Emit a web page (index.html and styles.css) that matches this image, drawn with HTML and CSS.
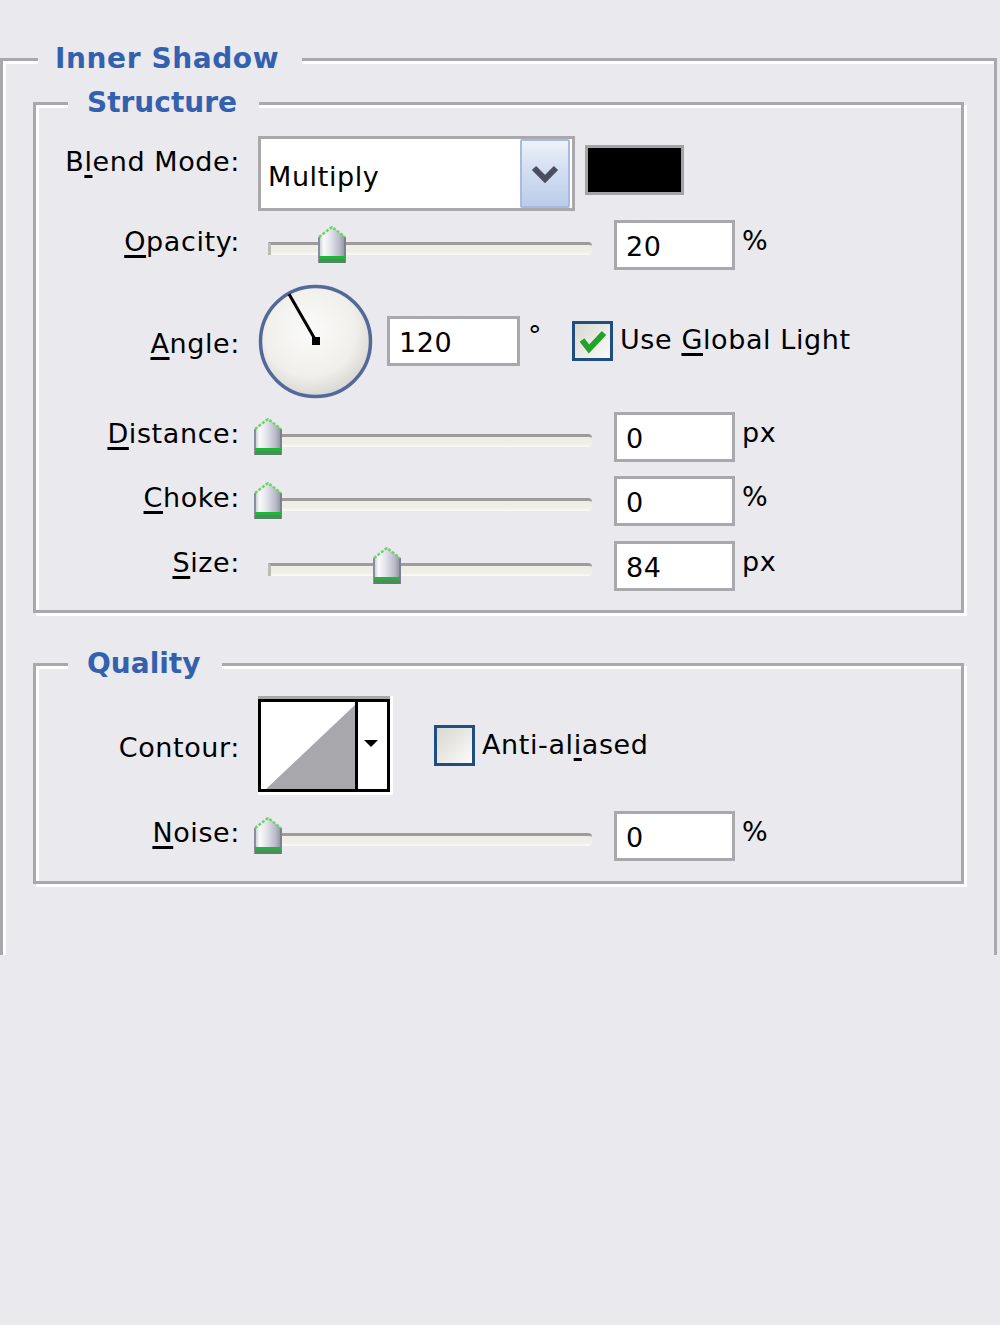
FILE: index.html
```html
<!DOCTYPE html>
<html>
<head>
<meta charset="utf-8">
<title>Inner Shadow</title>
<link rel="stylesheet" href="styles.css">
</head>
<body>
<svg class="defs" width="0" height="0" aria-hidden="true">
  <defs>
    <linearGradient id="thumbFill" x1="0" y1="0" x2="1" y2="0">
      <stop offset="0" stop-color="#c4c4d0"/>
      <stop offset="0.18" stop-color="#fbfbfd"/>
      <stop offset="0.45" stop-color="#e2e2ea"/>
      <stop offset="0.8" stop-color="#b9b9c8"/>
      <stop offset="1" stop-color="#8d8fa0"/>
    </linearGradient>
    <radialGradient id="dialFill" cx="0.45" cy="0.4" r="0.6">
      <stop offset="0" stop-color="#fbfbf9"/>
      <stop offset="0.7" stop-color="#f0efeb"/>
      <stop offset="1" stop-color="#d8d7d2"/>
    </radialGradient>
    <symbol id="thumb" viewBox="0 0 28 38">
      <polygon points="1,11 14,1 27,11 27,37 1,37" fill="url(#thumbFill)"/>
      <polyline points="1,37 1,11" fill="none" stroke="#8a8e9c" stroke-width="2"/>
      <polyline points="27,11 27,37" fill="none" stroke="#7c8090" stroke-width="2"/>
      <polyline points="1,11 14,1 27,11" fill="none" stroke="#6fd46f" stroke-width="2.5" stroke-dasharray="3 1.5"/>
      <rect x="1" y="30" width="26" height="3" fill="#1fb53a"/>
      <rect x="1" y="33" width="26" height="4" fill="#4d8a5e"/>
    </symbol>
  </defs>
</svg>

<div class="outer">
  <div class="title title-outer">Inner Shadow</div>

  <div class="group group-structure">
    <div class="title">Structure</div>

    <div class="row row-blend">
      <div class="label">B<u>l</u>end Mode:</div>
      <div class="select">
        <span class="select-text">Multiply</span>
        <span class="select-btn">
          <svg width="50" height="69" viewBox="0 0 50 69"><polyline points="14,29 25,40 36,29" fill="none" stroke="#4a4e5e" stroke-width="6"/></svg>
        </span>
      </div>
      <div class="swatch"></div>
    </div>

    <div class="row row-opacity">
      <div class="label"><u>O</u>pacity:</div>
      <div class="slider"><div class="track"></div><svg class="thumb" style="left:64px"><use href="#thumb"/></svg></div>
      <div class="field">20</div>
      <div class="unit">%</div>
    </div>

    <div class="row row-angle">
      <div class="label label-angle"><u>A</u>ngle:</div>
      <svg class="dial" width="115" height="115" viewBox="0 0 115 115">
        <circle cx="57.5" cy="57.5" r="55" fill="url(#dialFill)" stroke="#52699a" stroke-width="3.5"/>
        <line x1="58" y1="57" x2="31" y2="10" stroke="#000" stroke-width="3"/>
        <rect x="54" y="53" width="8" height="8" fill="#000"/>
      </svg>
      <div class="field field-angle">120</div>
      <div class="deg">°</div>
      <div class="checkbox">
        <svg width="35" height="34" viewBox="0 0 35 34"><polyline points="7,16 14,25 29,9" fill="none" stroke="#21a32a" stroke-width="6"/></svg>
      </div>
      <div class="check-label">Use <u>G</u>lobal Light</div>
    </div>

    <div class="row row-distance">
      <div class="label"><u>D</u>istance:</div>
      <div class="slider"><div class="track"></div><svg class="thumb" style="left:0px"><use href="#thumb"/></svg></div>
      <div class="field">0</div>
      <div class="unit">px</div>
    </div>

    <div class="row row-choke">
      <div class="label"><u>C</u>hoke:</div>
      <div class="slider"><div class="track"></div><svg class="thumb" style="left:0px"><use href="#thumb"/></svg></div>
      <div class="field">0</div>
      <div class="unit">%</div>
    </div>

    <div class="row row-size">
      <div class="label"><u>S</u>ize:</div>
      <div class="slider"><div class="track"></div><svg class="thumb" style="left:119px"><use href="#thumb"/></svg></div>
      <div class="field">84</div>
      <div class="unit">px</div>
    </div>
  </div>

  <div class="group group-quality">
    <div class="title">Quality</div>

    <div class="row row-contour">
      <div class="label label-contour">Contour:</div>
      <svg class="contour" width="135" height="99" viewBox="0 0 135 99">
        <rect x="0" y="0" width="135" height="99" fill="#fff"/>
        <rect x="0" y="0" width="132" height="3" fill="#a8a8ac"/>
        <rect x="1.5" y="4.5" width="129" height="90" fill="#fff" stroke="#000" stroke-width="3"/>
        <polygon points="8,93 98,8 98,93" fill="#a8a7ac"/>
        <rect x="97" y="4" width="3" height="90" fill="#000"/>
        <polygon points="106,44 120,44 113,51" fill="#000"/>
      </svg>
      <div class="checkbox checkbox-aa"></div>
      <div class="check-label">Anti-al<u>i</u>ased</div>
    </div>

    <div class="row row-noise">
      <div class="label"><u>N</u>oise:</div>
      <div class="slider"><div class="track"></div><svg class="thumb" style="left:0px"><use href="#thumb"/></svg></div>
      <div class="field">0</div>
      <div class="unit">%</div>
    </div>
  </div>
</div>
</body>
</html>
```

FILE: styles.css
```css
* { box-sizing: border-box; }

html, body {
  margin: 0;
  padding: 0;
}

body {
  width: 1000px;
  height: 1325px;
  overflow: hidden;
  background: #eae9ee;
  font-family: "DejaVu Sans", Verdana, sans-serif;
  font-size: 27px;
  letter-spacing: 0.6px;
  color: #000;
}

u {
  text-decoration-thickness: 3px;
  text-underline-offset: 4px;
}

.defs {
  display: block;
  width: 0;
  height: 0;
}

.outer {
  margin: 58px 3px 0 0;
  border: 3px solid #a9a9ad;
  border-bottom: none;
  box-shadow: inset 3px 3px 0 #fff;
  padding: 0 30px 71px 30px;
}

.title {
  display: block;
  width: fit-content;
  margin: -18px 0 0 32px;
  padding: 0 22px 0 19px;
  background: #eae9ee;
  color: #3461ad;
  font-weight: bold;
  font-size: 28px;
  line-height: 32px;
  letter-spacing: 0;
  white-space: nowrap;
}

.title-outer {
  margin-left: 5px;
  padding: 0 23px 0 17px;
  letter-spacing: 0.6px;
}

.group {
  border: 3px solid #a9a9ad;
  box-shadow: inset 3px 3px 0 #fff, 3px 3px 0 #fff;
}

.group-structure {
  margin-top: 27px;
  padding-bottom: 19px;
}

.group-quality {
  margin-top: 50px;
  padding-bottom: 21px;
}

.row {
  display: flex;
  align-items: center;
}

.label {
  flex: none;
  width: 204px;
  margin-right: 18px;
  text-align: right;
  line-height: 32px;
  padding-bottom: 6px;
  white-space: nowrap;
}

/* Blend mode row */
.row-blend {
  margin-top: 17px;
  height: 75px;
  align-items: flex-start;
}

.row-blend .label {
  margin-top: 10px;
  padding-bottom: 0;
}

.select {
  flex: none;
  width: 317px;
  height: 75px;
  border: 3px solid #a9a9ad;
  background: #fff;
  display: flex;
  align-items: center;
}

.select-text {
  flex: 1;
  padding: 5px 0 0 7px;
}

.select-btn {
  flex: none;
  width: 50px;
  height: 69px;
  margin-right: 2px;
  border: 2px solid #a6bbdf;
  border-radius: 2px;
  background: linear-gradient(#eef2fa, #d3def1 45%, #bccde9);
  display: flex;
}

.select-btn svg {
  display: block;
  margin: -2px;
}

.swatch {
  flex: none;
  width: 99px;
  height: 50px;
  margin: 9px 0 0 10px;
  border: 3px solid #a3a3a7;
  background: #000;
}

/* sliders */
.slider {
  position: relative;
  flex: none;
  width: 340px;
  height: 38px;
  margin-left: -4px;
}

.track {
  width: 324px;
  height: 13px;
  margin: 16px 0 0 14px;
  border-top: 3px solid #9c9c9c;
  border-left: 3px solid #bdbdb5;
  border-radius: 0 4px 4px 0;
  background: linear-gradient(#efeee6, #f0efe7 70%, #fbfbf8);
}

.thumb {
  position: absolute;
  top: 0;
  width: 28px;
  height: 38px;
}

.field {
  flex: none;
  width: 121px;
  height: 50px;
  margin-left: 20px;
  padding: 3px 0 0 9px;
  border: 3px solid #a9a9ad;
  background: #fff;
  display: flex;
  align-items: center;
}

.unit {
  align-self: flex-start;
  margin: 5px 0 0 7px;
  line-height: 32px;
}

.row-opacity {
  margin-top: 9px;
  height: 49px;
}

/* angle row */
.row-angle {
  margin-top: 15px;
  height: 114px;
}

.label-angle {
  padding-bottom: 0;
  padding-top: 6px;
}

.dial {
  flex: none;
  display: block;
}

.field-angle {
  width: 133px;
  margin-left: 14px;
}

.deg {
  flex: none;
  width: 52px;
  padding: 0 0 10px 8px;
  line-height: 32px;
}

.checkbox {
  flex: none;
  width: 41px;
  height: 40px;
  border: 3px solid #1f4f80;
  background: linear-gradient(135deg, #d8d7d1, #fbfbfa);
}

.checkbox svg {
  display: block;
}

.check-label {
  margin-left: 7px;
  line-height: 32px;
  padding-bottom: 2px;
  white-space: nowrap;
}

.row-distance,
.row-choke {
  margin-top: 14px;
  height: 50px;
}

.row-size {
  margin-top: 15px;
  height: 50px;
}

/* quality */
.row-contour {
  margin-top: 16px;
  height: 99px;
}

.label-contour {
  padding-bottom: 0;
  padding-top: 5px;
}

.contour {
  flex: none;
  display: block;
}

.checkbox-aa {
  width: 41px;
  height: 41px;
  margin-left: 41px;
}

.row-noise {
  margin-top: 16px;
  height: 49px;
}
```
